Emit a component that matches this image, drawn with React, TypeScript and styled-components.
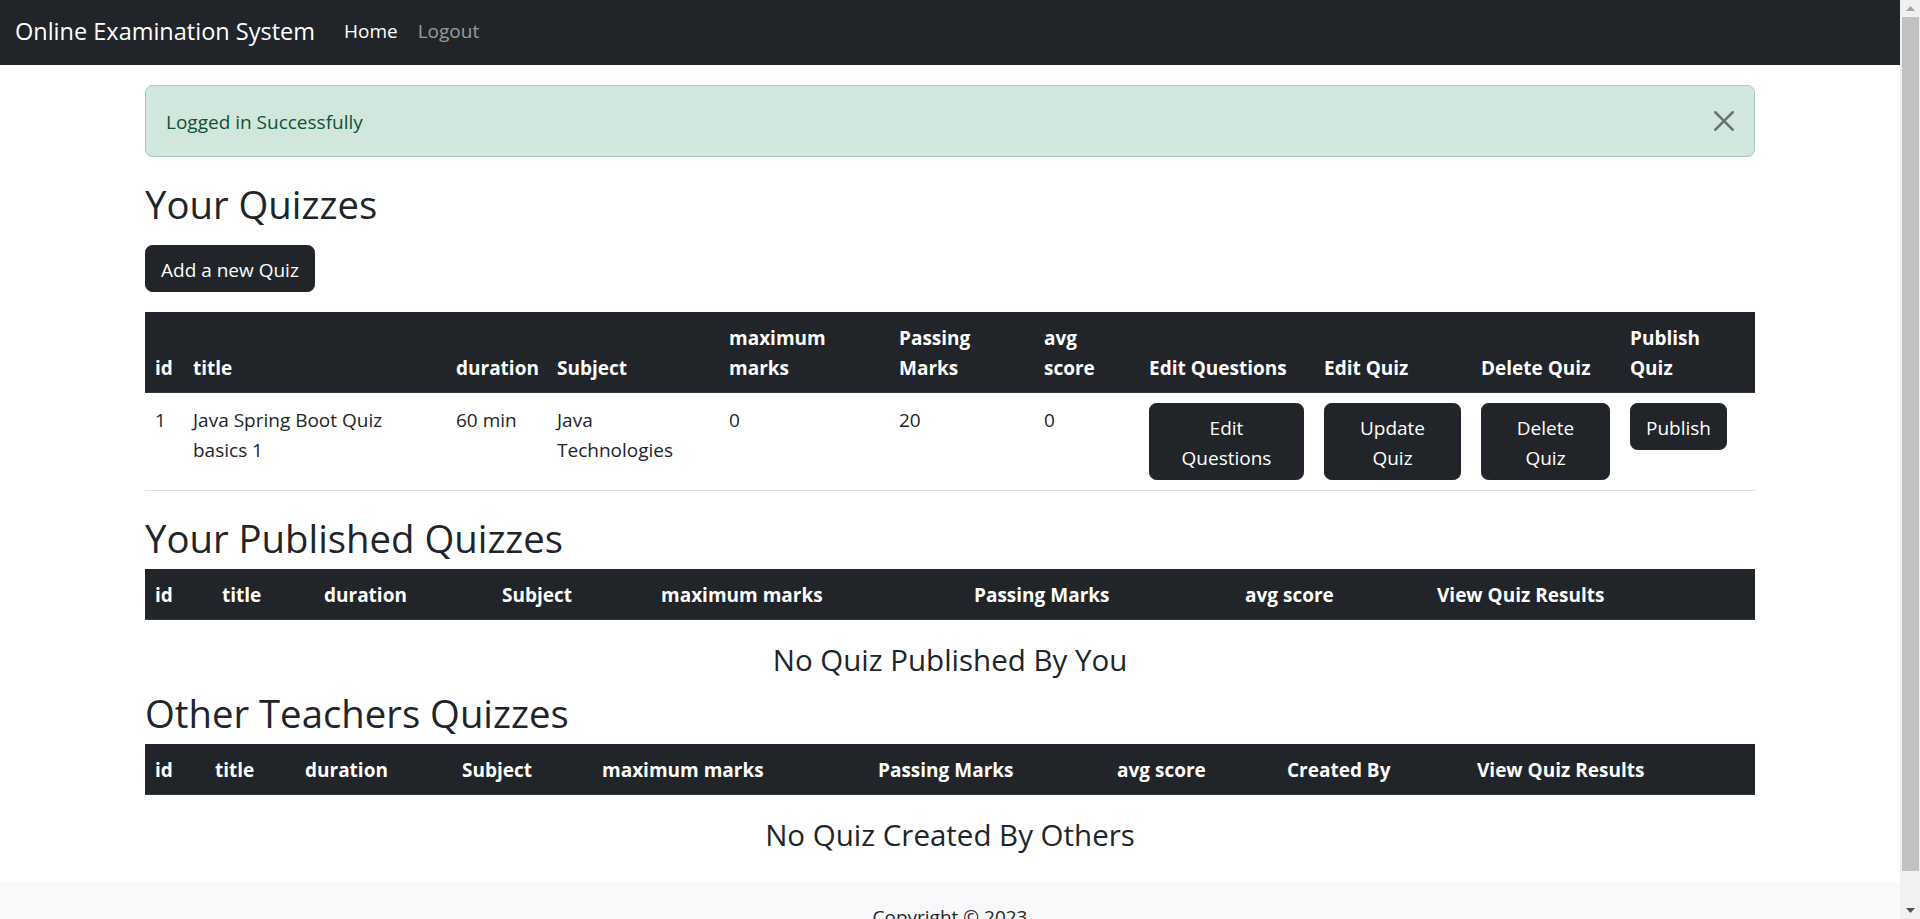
import React from "react";
import styled, { createGlobalStyle, css } from "styled-components";

const GlobalStyle = createGlobalStyle`
  html, body { margin: 0; padding: 0; background: #fff; }
  body {
    font-family: "Open Sans", "Noto Sans", "Liberation Sans", sans-serif;
    font-size: 19px;
    line-height: 30px;
    color: #212529;
    padding-right: 20px;
  }
  html { scrollbar-width: none; }
  ::-webkit-scrollbar { display: none; }
  *, *::before, *::after { box-sizing: border-box; }
`;

const ScrollTrack = styled.div`
  position: fixed;
  top: 0;
  right: 0;
  width: 20px;
  height: 100vh;
  background: #f1f1f1;
  display: flex;
  flex-direction: column;
  z-index: 10;
`;

const ScrollArrow = styled.div`
  height: 17px;
  flex: none;
  display: flex;
  align-items: center;
  justify-content: center;
`;

const ScrollThumb = styled.div`
  flex: none;
  height: 854px;
  margin: 0 1px 0 2px;
  background: #c1c1c1;
`;

const ScrollSpacer = styled.div`
  flex: 1;
`;

const NavBar = styled.nav`
  height: 65px;
  background: #212529;
  display: flex;
  align-items: center;
  padding: 0 15px 3px;
`;

const Brand = styled.a`
  color: #fff;
  font-size: 23.5px;
  line-height: 37px;
  margin-right: 19px;
  text-decoration: none;
`;

const NavLinks = styled.div`
  display: flex;
  align-items: center;
`;

const NavLink = styled.a<{ $active?: boolean }>`
  padding: 0 10px;
  font-size: 19px;
  line-height: 30px;
  text-decoration: none;
  color: ${(p) => (p.$active ? "#fff" : "rgba(255,255,255,0.55)")};
`;

const Container = styled.main`
  width: 1610px;
  margin: 0 auto;
  padding: 20px 0 21px;
`;

const Alert = styled.div`
  display: flex;
  align-items: center;
  justify-content: space-between;
  padding: 21px 20px 19px;
  margin-bottom: 20px;
  background: #d1e7dd;
  border: 1px solid #a3cfbb;
  border-radius: 7.5px;
  color: #0f5132;
`;

const CloseButton = styled.button`
  width: 20px;
  height: 20px;
  margin-top: -2px;
  padding: 0;
  border: 0;
  background: transparent;
  opacity: 0.5;
  display: flex;
  align-items: center;
  justify-content: center;
  cursor: pointer;
`;

const SectionTitle = styled.h2`
  margin: 0 0 7px;
  padding-top: 3px;
  font-size: 38.3px;
  line-height: 48px;
  font-weight: 500;
  color: #212529;
`;

const Toolbar = styled.div`
  padding-top: 10px;
  margin-bottom: 20px;
`;

const Button = styled.button<{ $fill?: boolean }>`
  display: inline-block;
  font-family: inherit;
  font-size: 19px;
  line-height: 30px;
  padding: 8.5px 15px 6.5px;
  color: #fff;
  background: #212529;
  border: 1px solid #212529;
  border-radius: 7.5px;
  text-align: center;
  cursor: pointer;
  ${(p) =>
    p.$fill &&
    css`
      width: 100%;
    `}
`;

const Table = styled.table`
  width: 100%;
  table-layout: fixed;
  border-collapse: collapse;
  margin-bottom: 20px;
`;

const HeadCell = styled.th`
  background: #212529;
  color: #fff;
  font-weight: 700;
  text-align: left;
  vertical-align: bottom;
  padding: 11px 10px 9px;
  line-height: 30px;
  border-bottom: 1px solid #373b3e;
  white-space: nowrap;
`;

const Cell = styled.td<{ $text?: boolean }>`
  padding: ${(p) => (p.$text ? "12px 10px 8px" : "10px")};
  vertical-align: top;
  line-height: 30px;
  border-bottom: 1px solid #dee2e6;
`;

const EmptyNote = styled.h4`
  margin: 0 0 8px;
  padding-top: 2px;
  text-align: center;
  font-size: 29.5px;
  line-height: 36px;
  font-weight: 500;
`;

const Footer = styled.footer`
  background: #f8f9fa;
  padding: 20px;
  text-align: center;
  color: #212529;
`;

type Column = { label: string[]; width: number };

const yourCols: Column[] = [
  { label: ["id"], width: 38 },
  { label: ["title"], width: 263 },
  { label: ["duration"], width: 101 },
  { label: ["Subject"], width: 172 },
  { label: ["maximum", "marks"], width: 170 },
  { label: ["Passing", "Marks"], width: 145 },
  { label: ["avg", "score"], width: 105 },
  { label: ["Edit Questions"], width: 175 },
  { label: ["Edit Quiz"], width: 157 },
  { label: ["Delete Quiz"], width: 149 },
  { label: ["Publish", "Quiz"], width: 135 },
];

const publishedCols: Column[] = [
  { label: ["id"], width: 67 },
  { label: ["title"], width: 102 },
  { label: ["duration"], width: 178 },
  { label: ["Subject"], width: 159 },
  { label: ["maximum marks"], width: 313 },
  { label: ["Passing Marks"], width: 271 },
  { label: ["avg score"], width: 192 },
  { label: ["View Quiz Results"], width: 328 },
];

const otherCols: Column[] = [
  { label: ["id"], width: 60 },
  { label: ["title"], width: 90 },
  { label: ["duration"], width: 157 },
  { label: ["Subject"], width: 140 },
  { label: ["maximum marks"], width: 276 },
  { label: ["Passing Marks"], width: 239 },
  { label: ["avg score"], width: 170 },
  { label: ["Created By"], width: 190 },
  { label: ["View Quiz Results"], width: 288 },
];

const quizzes = [
  {
    id: 1,
    title: "Java Spring Boot Quiz basics 1",
    duration: "60 min",
    subject: "Java Technologies",
    maxMarks: 0,
    passing: 20,
    avg: 0,
  },
];

function TableHead({ cols }: { cols: Column[] }) {
  return (
    <>
      <colgroup>
        {cols.map((c, i) => (
          <col key={i} style={{ width: c.width }} />
        ))}
      </colgroup>
      <thead>
        <tr>
          {cols.map((c, i) => (
            <HeadCell key={i}>
              {c.label.map((line, j) => (
                <React.Fragment key={j}>
                  {j > 0 && <br />}
                  {line}
                </React.Fragment>
              ))}
            </HeadCell>
          ))}
        </tr>
      </thead>
    </>
  );
}

function CloseIcon() {
  return (
    <svg width="20" height="20" viewBox="0 0 16 16" fill="#000" aria-hidden="true">
      <path d="M.293.293a1 1 0 0 1 1.414 0L8 6.586 14.293.293a1 1 0 1 1 1.414 1.414L9.414 8l6.293 6.293a1 1 0 0 1-1.414 1.414L8 9.414l-6.293 6.293a1 1 0 0 1-1.414-1.414L6.586 8 .293 1.707a1 1 0 0 1 0-1.414z" />
    </svg>
  );
}

function Triangle({ up, color }: { up?: boolean; color: string }) {
  return (
    <svg width="9" height="5" viewBox="0 0 9 5" aria-hidden="true">
      <path d={up ? "M0 5 L4.5 0 L9 5 Z" : "M0 0 L4.5 5 L9 0 Z"} fill={color} />
    </svg>
  );
}

export default function App() {
  return (
    <>
      <GlobalStyle />
      <NavBar>
        <Brand href="#">Online Examination System</Brand>
        <NavLinks>
          <NavLink href="#" $active>
            Home
          </NavLink>
          <NavLink href="#">Logout</NavLink>
        </NavLinks>
      </NavBar>
      <Container>
        <Alert role="alert">
          <span>Logged in Successfully</span>
          <CloseButton aria-label="Close">
            <CloseIcon />
          </CloseButton>
        </Alert>

        <SectionTitle>Your Quizzes</SectionTitle>
        <Toolbar>
          <Button>Add a new Quiz</Button>
        </Toolbar>
        <Table>
          <TableHead cols={yourCols} />
          <tbody>
            {quizzes.map((q) => (
              <tr key={q.id}>
                <Cell $text>{q.id}</Cell>
                <Cell $text>{q.title}</Cell>
                <Cell $text>{q.duration}</Cell>
                <Cell $text>{q.subject}</Cell>
                <Cell $text>{q.maxMarks}</Cell>
                <Cell $text>{q.passing}</Cell>
                <Cell $text>{q.avg}</Cell>
                <Cell>
                  <Button $fill>Edit Questions</Button>
                </Cell>
                <Cell>
                  <Button $fill>Update Quiz</Button>
                </Cell>
                <Cell>
                  <Button $fill>Delete Quiz</Button>
                </Cell>
                <Cell>
                  <Button>Publish</Button>
                </Cell>
              </tr>
            ))}
          </tbody>
        </Table>

        <SectionTitle>Your Published Quizzes</SectionTitle>
        <Table>
          <TableHead cols={publishedCols} />
        </Table>
        <EmptyNote>No Quiz Published By You</EmptyNote>

        <SectionTitle>Other Teachers Quizzes</SectionTitle>
        <Table>
          <TableHead cols={otherCols} />
        </Table>
        <EmptyNote>No Quiz Created By Others</EmptyNote>
      </Container>
      <Footer>Copyright © 2023</Footer>
      <ScrollTrack aria-hidden="true">
        <ScrollArrow>
          <Triangle up color="#a3a3a3" />
        </ScrollArrow>
        <ScrollThumb />
        <ScrollSpacer />
        <ScrollArrow>
          <Triangle color="#505050" />
        </ScrollArrow>
      </ScrollTrack>
    </>
  );
}
